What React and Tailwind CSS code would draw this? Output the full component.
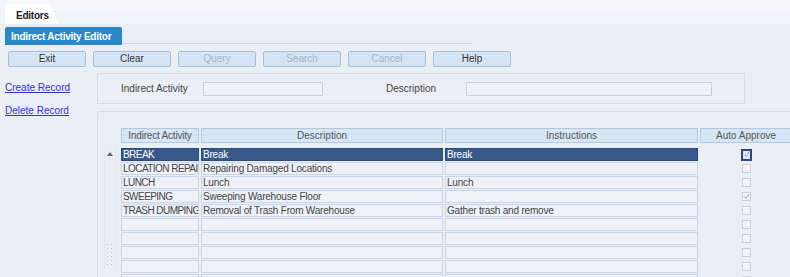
import React from 'react';

const rows = [
  { act: 'BREAK', desc: 'Break', ins: 'Break', auto: true, sel: true },
  { act: 'LOCATION REPAIR', desc: 'Repairing Damaged Locations', ins: '', auto: false },
  { act: 'LUNCH', desc: 'Lunch', ins: 'Lunch', auto: false },
  { act: 'SWEEPING', desc: 'Sweeping Warehouse Floor', ins: '', auto: true },
  { act: 'TRASH DUMPING', desc: 'Removal of Trash From Warehouse', ins: 'Gather trash and remove', auto: false },
  {}, {}, {}, {}, {},
];

const ToolButton = ({ label, disabled }) => (
  <button
    className={`w-[78px] h-[16px] rounded-[2px] border border-[#a9bdd6] bg-[#d5e4f4] text-[10px] leading-none ${
      disabled ? 'text-[#a8b4c2]' : 'text-[#333]'
    }`}
  >
    {label}
  </button>
);

const Cell = ({ w, children, sel }) => (
  <div
    className={`h-[13px] shrink-0 overflow-hidden whitespace-nowrap border pl-px text-[10px] leading-[11px] ${w} ${
      sel ? 'bg-[#375a8b] border-[#2b4a78] text-white' : 'bg-[#eef1f7] border-[#c8d5e6] text-[#444]'
    }`}
  >
    {children}
  </div>
);

const Check = ({ on, sel }) => (
  <div
    className={`flex items-center justify-center ${
      sel ? 'w-[11px] h-[12px] border-2 border-[#2b4a78] bg-[#e4e8ee]' : 'w-[9px] h-[9px] border border-[#c9d0da] bg-[#f2f4f8]'
    }`}
  >
    {on && (
      <svg width="7" height="7" viewBox="0 0 7 7">
        <path d="M1 3.5 L3 5.5 L6 1" fill="none" stroke="#9aa4b0" strokeWidth="1" />
      </svg>
    )}
  </div>
);

export default function App() {
  return (
    <div className="w-[790px] h-[277px] overflow-hidden bg-[#eaeef5] font-['Liberation_Sans',Arial,sans-serif]">
      {/* tab strip */}
      <div className="h-[24px] bg-gradient-to-b from-[#f7f9fc] to-[#eef3fa] flex items-end pl-[5px]">
        <div className="h-[20px] w-[54px] bg-white rounded-tl-[3px] [clip-path:polygon(0_0,82%_0,100%_100%,0_100%)] pl-[11px] pt-[4px] text-[10px] font-bold text-[#222] tracking-tight">
          Editors
        </div>
      </div>

      {/* editor tab */}
      <div className="flex items-end h-[21px] pl-[5px] pt-[2px]">
        <div className="h-[18px] w-[117px] bg-[#2a87c9] rounded-t-[2px] text-white text-[10px] font-bold flex items-center pl-[6px] tracking-tight">
          Indirect Activity Editor
        </div>
        <div className="w-[350px] h-px bg-[#c9d6e6] mb-[1px]"></div>
      </div>

      {/* toolbar */}
      <div className="flex gap-[7px] pl-[8px] pt-[6px]">
        <ToolButton label="Exit" />
        <ToolButton label="Clear" />
        <ToolButton label="Query" disabled />
        <ToolButton label="Search" disabled />
        <ToolButton label="Cancel" disabled />
        <ToolButton label="Help" />
      </div>

      <div className="flex mt-[6px]">
        {/* left links */}
        <div className="w-[97px] shrink-0 flex flex-col gap-[11px] pl-[5px] pt-[9px]">
          <a className="text-[10px] text-[#3434c8] underline leading-[12px]">Create Record</a>
          <a className="text-[10px] text-[#3434c8] underline leading-[12px]">Delete Record</a>
        </div>

        <div className="flex-1 flex flex-col gap-[7px]">
          {/* form panel */}
          <div className="w-[648px] h-[31px] border border-[#d6dde8] flex items-center pl-[23px]">
            <span className="text-[10px] text-[#444] w-[82px]">Indirect Activity</span>
            <div className="w-[120px] h-[14px] border border-[#c5ceda] bg-[#eef1f6] rounded-[1px]"></div>
            <span className="text-[10px] text-[#444] ml-[63px] w-[80px]">Description</span>
            <div className="w-[246px] h-[14px] border border-[#c5ceda] bg-[#eef1f6] rounded-[1px]"></div>
          </div>

          {/* table panel */}
          <div className="h-[170px] border-t border-l border-[#d6dde8] rounded-tl-[3px] pt-[16px] flex">
            <div className="w-[23px] shrink-0 flex flex-col items-center pt-[21px]">
              <div className="w-[12px] h-[120px] border-x border-[#e2e7ef] flex flex-col items-center pt-[3px]">
                <div className="w-0 h-0 border-l-[3px] border-r-[3px] border-b-[4px] border-l-transparent border-r-transparent border-b-[#666]"></div>
                <div className="mt-auto mb-[4px] flex flex-col gap-[3px]">
                  {[0, 1, 2, 3, 4, 5].map((d) => (
                    <div key={d} className="flex gap-[3px]">
                      <div className="w-px h-px bg-[#b8c2ce]"></div>
                      <div className="w-px h-px bg-[#b8c2ce]"></div>
                    </div>
                  ))}
                </div>
              </div>
            </div>
            <div className="flex flex-col">
              {/* header */}
              <div className="flex h-[15px] mb-[5px] text-[10px] text-[#555]">
                <div className="w-[78px] mr-[2px] border border-[#b4c6db] bg-[#d6e6f5] flex items-center justify-center tracking-[-0.2px]">Indirect Activity</div>
                <div className="w-[242px] mr-[2px] border border-[#b4c6db] bg-[#d6e6f5] flex items-center justify-center">Description</div>
                <div className="w-[253px] mr-[2px] border border-[#b4c6db] bg-[#d6e6f5] flex items-center justify-center">Instructions</div>
                <div className="w-[92px] border border-[#b4c6db] bg-[#d6e6f5] flex items-center justify-center">Auto Approve</div>
              </div>
              {rows.map((r, i) => (
                <div key={i} className="flex mb-px">
                  <Cell w="w-[78px] mr-[2px] tracking-[-0.55px]" sel={r.sel}>{r.act}</Cell>
                  <Cell w="w-[242px] mr-[2px] tracking-[-0.2px]" sel={r.sel}>{r.desc}</Cell>
                  <Cell w="w-[253px] mr-[2px] tracking-[-0.2px]" sel={r.sel}>{r.ins}</Cell>
                  <div className="w-[92px] h-[13px] flex items-center justify-center">
                    <Check on={r.auto} sel={r.sel} />
                  </div>
                </div>
              ))}
            </div>
          </div>
        </div>
      </div>
    </div>
  );
}
